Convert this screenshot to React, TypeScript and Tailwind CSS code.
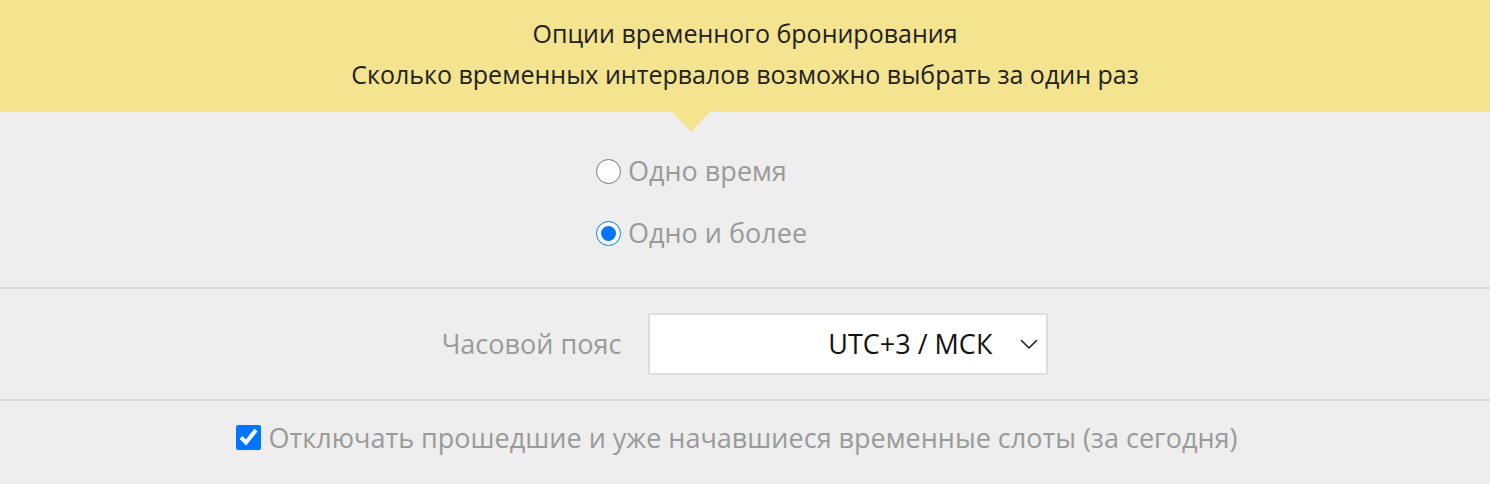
import React from "react";

export default function App() {
  return (
    <div className="w-[1490px] h-[484px] bg-[#eeeeee] overflow-hidden" style={{ fontFamily: '"Open Sans", sans-serif' }}>
      <div className="relative h-[112px] bg-[#f4e38f] flex flex-col items-center justify-center text-[#222222] text-[25px] leading-[41px] pb-[5px]">
        <div>Опции временного бронирования</div>
        <div>Сколько временных интервалов возможно выбрать за один раз</div>
        <div className="absolute left-[672px] top-[112px] w-0 h-0 border-l-[19px] border-r-[19px] border-t-[20px] border-l-transparent border-r-transparent border-t-[#f4e38f]" />
      </div>
      <div className="h-[175px] flex justify-center pt-[47px]">
        <div className="w-[300px] flex flex-col gap-[38px]">
          <label className="flex items-center gap-[7px] h-[24px] text-[27px] text-[#9a9a9a] ml-[1px]">
            <input type="radio" name="r" className="w-[25px] h-[25px] m-0 shrink-0" />
            <span className="leading-[24px]">Одно время</span>
          </label>
          <label className="flex items-center gap-[7px] h-[24px] text-[27px] text-[#9a9a9a] ml-[1px]">
            <input type="radio" name="r" defaultChecked className="w-[25px] h-[25px] m-0 shrink-0" />
            <span className="leading-[24px]">Одно и более</span>
          </label>
        </div>
      </div>
      <div className="h-[2px] bg-[#dcdcdc]" />
      <div className="h-[110px] flex items-center justify-center gap-[27px]">
        <span className="text-[27px] text-[#9a9a9a]">Часовой пояс</span>
        <div className="w-[400px] h-[62px] bg-white border-2 border-[#dddddd] flex items-center justify-end pr-[8px]">
          <span className="text-[27px] text-[#111111] mr-[28px]">UTC+3 / МСК</span>
          <svg width="18" height="11" viewBox="0 0 18 11" fill="none" stroke="#222" strokeWidth="1.6" strokeLinecap="round" strokeLinejoin="round">
            <path d="M1.5 1.5 L9 9 L16.5 1.5" />
          </svg>
        </div>
      </div>
      <div className="h-[2px] bg-[#dcdcdc]" />
      <div className="h-[83px] flex items-start justify-center pt-[24px] pr-[17px]">
        <label className="flex items-center gap-[8px] h-[25px] text-[27px] text-[#9a9a9a]">
          <input type="checkbox" defaultChecked className="w-[25px] h-[25px] m-0 shrink-0" />
          <span className="leading-[25px]">Отключать прошедшие и уже начавшиеся временные слоты (за сегодня)</span>
        </label>
      </div>
    </div>
  );
}
